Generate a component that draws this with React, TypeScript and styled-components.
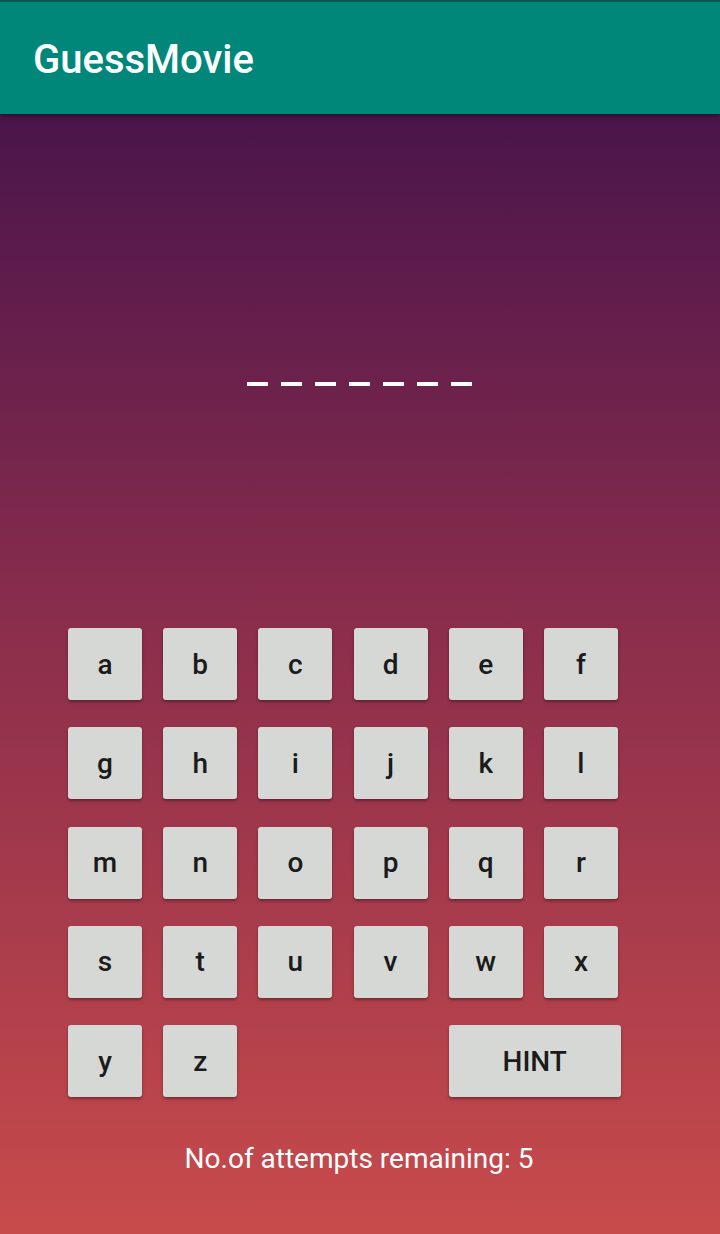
import React from "react";
import styled, { createGlobalStyle } from "styled-components";

const Global = createGlobalStyle`
  html, body { margin: 0; padding: 0; }
  body { font-family: Roboto, "Noto Sans", sans-serif; }
`;

const Screen = styled.div`
  width: 720px;
  height: 1234px;
  display: flex;
  flex-direction: column;
  overflow: hidden;
`;

const AppBar = styled.header`
  height: 112px;
  border-top: 2px solid #05584e;
  background: #00877a;
  display: flex;
  align-items: center;
  padding-left: 33px;
  box-shadow: 0 2px 5px rgba(0, 0, 0, 0.45);
  position: relative;
  z-index: 1;
`;

const Title = styled.h1`
  margin: 0;
  color: #ffffff;
  font-family: Roboto, sans-serif;
  font-weight: 500;
  font-size: 40px;
  letter-spacing: 0;
  padding-top: 3px;
`;

const Main = styled.main`
  flex: 1;
  display: flex;
  flex-direction: column;
  background: linear-gradient(180deg, #4a154b 0%, #8a2d4c 45%, #c84b4b 100%);
`;

const Word = styled.div`
  display: flex;
  justify-content: center;
  gap: 13px;
  margin-top: 268px;
  padding-right: 2px;
`;

const Dash = styled.span`
  width: 21px;
  height: 4px;
  background: #ffffff;
`;

const Keyboard = styled.div`
  display: grid;
  grid-template-columns: repeat(6, 74px);
  grid-auto-rows: 72px;
  column-gap: 21.2px;
  row-gap: 27.25px;
  padding-left: 68px;
  margin-top: 242px;
`;

const Key = styled.button<{ $wide?: boolean }>`
  width: ${(p) => (p.$wide ? "172px" : "74px")};
  height: 72px;
  grid-column: ${(p) => (p.$wide ? "5 / span 2" : "auto")};
  border: none;
  border-radius: 3px;
  background: #d6d8d5;
  color: #1b1b1b;
  font-family: Roboto, sans-serif;
  font-weight: 500;
  font-size: 28px;
  padding: 0;
  display: flex;
  align-items: center;
  justify-content: center;
  box-shadow: 0 2px 3px rgba(0, 0, 0, 0.35);
`;

const Status = styled.p`
  margin: 45px 0 0;
  text-align: center;
  color: #ffffff;
  font-family: Roboto, sans-serif;
  font-size: 28px;
  padding-right: 2px;
`;

const rows = [
  ["a", "b", "c", "d", "e", "f"],
  ["g", "h", "i", "j", "k", "l"],
  ["m", "n", "o", "p", "q", "r"],
  ["s", "t", "u", "v", "w", "x"],
];

export default function App() {
  return (
    <Screen>
      <Global />
      <AppBar>
        <Title>GuessMovie</Title>
      </AppBar>
      <Main>
        <Word>
          {Array.from({ length: 7 }).map((_, i) => (
            <Dash key={i} />
          ))}
        </Word>
        <Keyboard>
          {rows.flat().map((l) => (
            <Key key={l}>{l}</Key>
          ))}
          <Key>y</Key>
          <Key>z</Key>
          <Key $wide>HINT</Key>
        </Keyboard>
        <Status>No.of attempts remaining: 5</Status>
      </Main>
    </Screen>
  );
}
